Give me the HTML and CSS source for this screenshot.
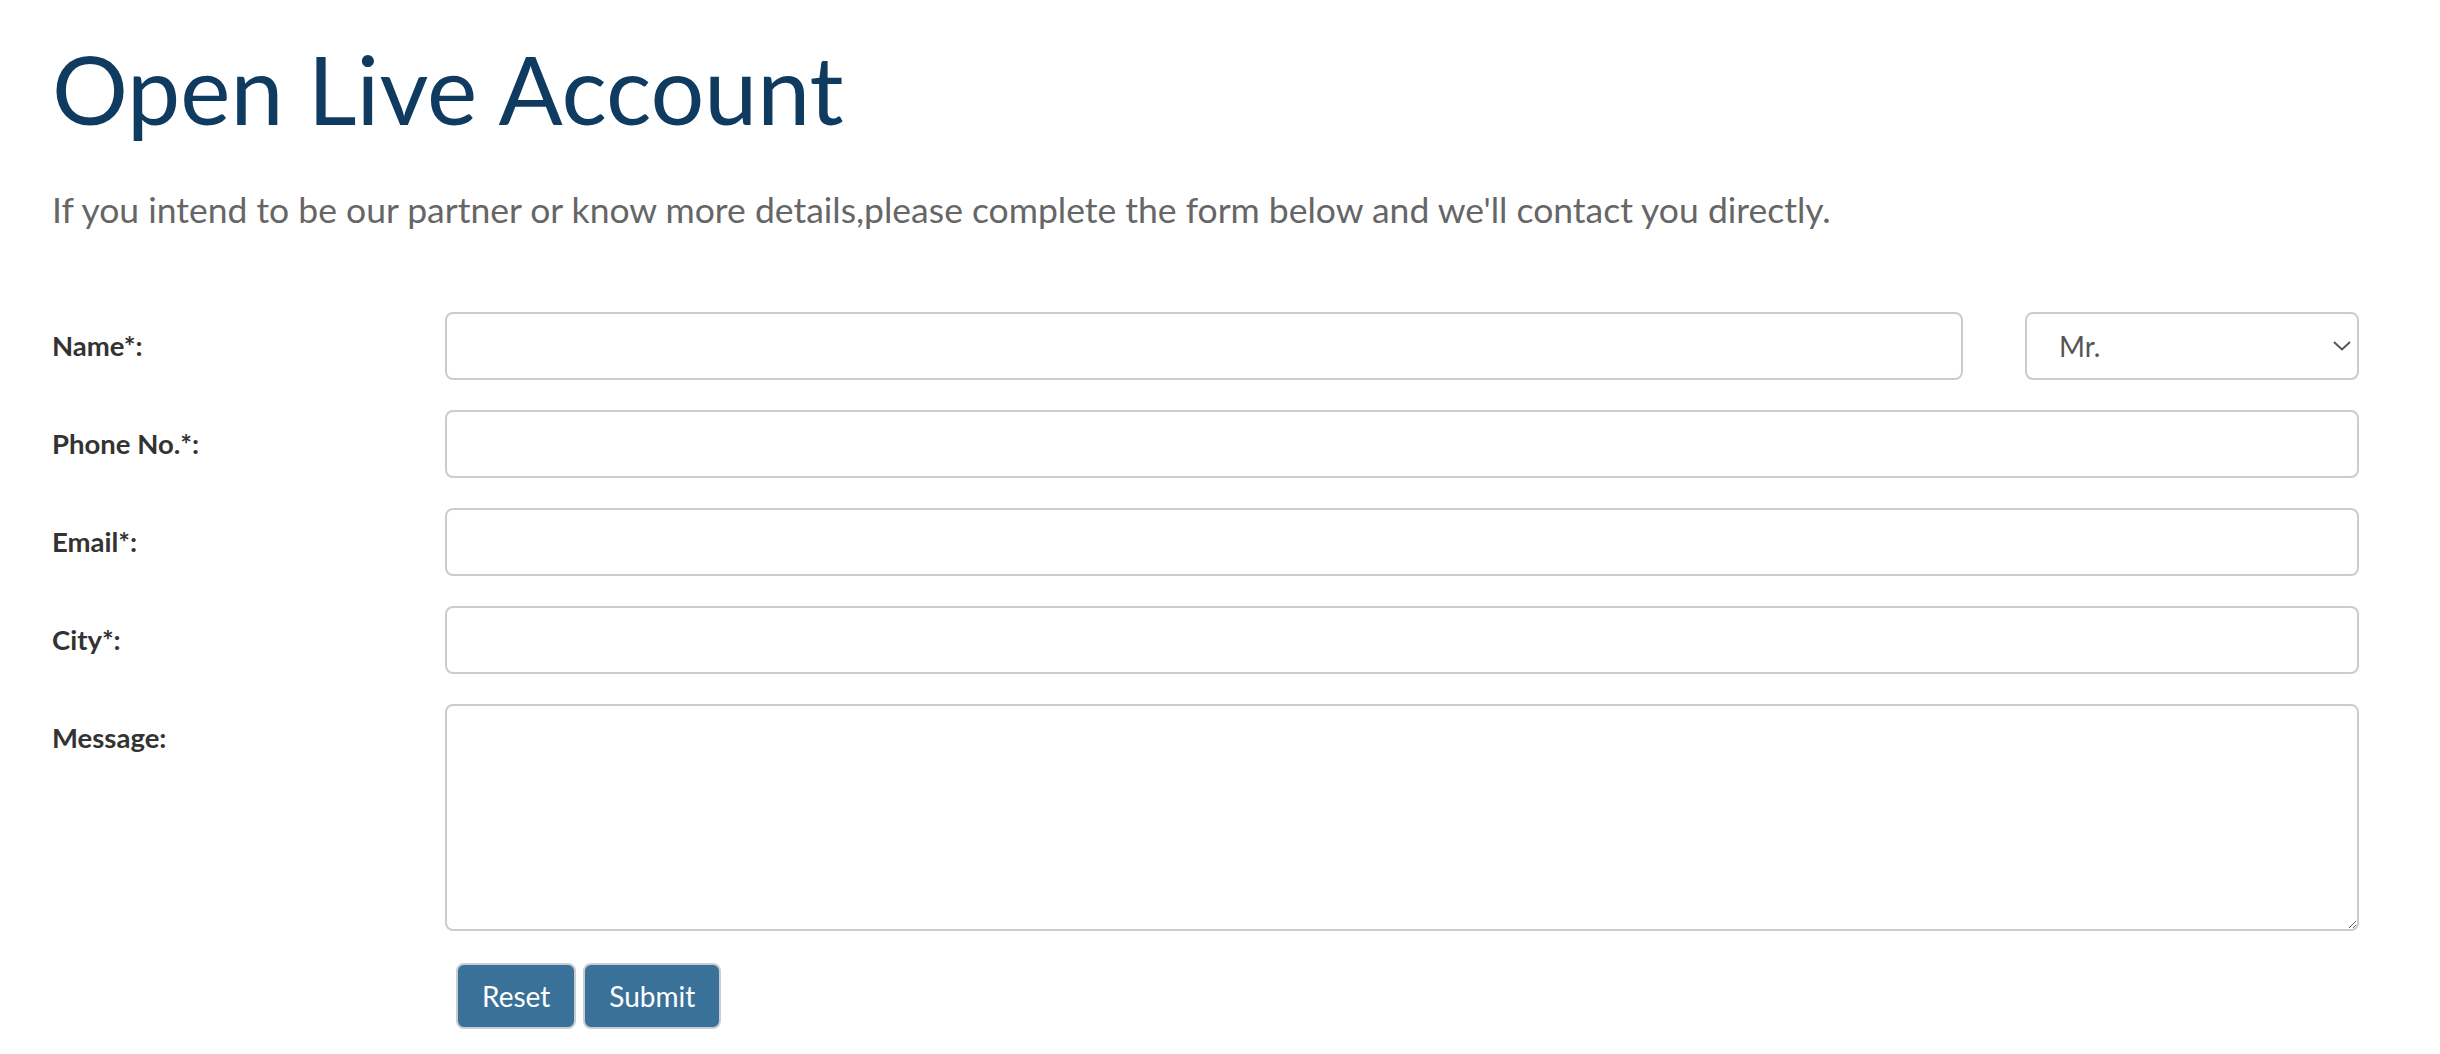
FILE: index.html
```html
<!DOCTYPE html>
<html lang="en">
<head>
<meta charset="utf-8">
<title>Open Live Account</title>
<link rel="stylesheet" href="styles.css">
</head>
<body>
<main class="page">
  <h1 class="title">Open Live Account</h1>
  <p class="intro">If you intend to be our partner or know more details,please complete the form below and we'll contact you directly.</p>
  <form class="form">
    <div class="row">
      <label class="label" for="name">Name*:</label>
      <div class="name-fields">
        <input class="control" id="name" type="text">
        <div class="select-wrap">
          <select class="control select">
            <option>Mr.</option>
            <option>Ms.</option>
          </select>
          <svg class="chevron" width="18" height="10" viewBox="0 0 18 10" aria-hidden="true"><path d="M1 1 L9 8.5 L17 1" fill="none" stroke="#555" stroke-width="2"/></svg>
        </div>
      </div>
    </div>
    <div class="row">
      <label class="label" for="phone">Phone No.*:</label>
      <input class="control" id="phone" type="text">
    </div>
    <div class="row">
      <label class="label" for="email">Email*:</label>
      <input class="control" id="email" type="text">
    </div>
    <div class="row">
      <label class="label" for="city">City*:</label>
      <input class="control" id="city" type="text">
    </div>
    <div class="row row-message">
      <label class="label" for="message">Message:</label>
      <textarea class="control textarea" id="message"></textarea>
    </div>
    <div class="row row-actions">
      <span></span>
      <div class="actions">
        <button class="btn" type="reset">Reset</button>
        <button class="btn" type="button">Submit</button>
      </div>
    </div>
  </form>
</main>
</body>
</html>
```

FILE: styles.css
```css
html, body {
  margin: 0;
  padding: 0;
  background: #ffffff;
}

body {
  font-family: Lato, "Open Sans", "Liberation Sans", sans-serif;
  color: #333333;
}

.page {
  padding: 35px 81px 0 52px;
}

.title {
  margin: 0;
  font-size: 95px;
  line-height: 106px;
  font-weight: 400;
  color: #0f3b60;
}

.intro {
  margin: 43px 0 0 0;
  font-size: 35.5px;
  line-height: 51px;
  color: #666666;
}

.form {
  margin-top: 77px;
}

.row {
  display: grid;
  grid-template-columns: 393px 1fr;
  margin-bottom: 30px;
}

.label {
  font-size: 27.5px;
  line-height: 40px;
  font-weight: 700;
  padding-top: 14px;
  color: #333333;
}

.control {
  box-sizing: border-box;
  height: 68px;
  width: 100%;
  margin: 0;
  border: 2px solid #cccccc;
  border-radius: 8px;
  background: #ffffff;
  font-family: Lato, "Open Sans", "Liberation Sans", sans-serif;
  font-size: 28px;
  color: #555555;
  padding: 0 24px;
  outline: none;
}

.name-fields {
  display: grid;
  grid-template-columns: 1fr 334px;
  column-gap: 62px;
}

.select-wrap {
  position: relative;
}

.select {
  appearance: none;
  -webkit-appearance: none;
  padding-left: 32px;
}

.chevron {
  position: absolute;
  right: 8px;
  top: 29px;
  pointer-events: none;
}

.row-message {
  margin-bottom: 32px;
}

.textarea {
  height: 227px;
  resize: both;
  padding: 12px 24px;
}

.actions {
  display: flex;
  gap: 7px;
  padding-left: 11px;
}

.btn {
  box-sizing: border-box;
  height: 66px;
  padding: 0 24px;
  border: 2px solid #c9ced3;
  border-radius: 8px;
  background: #3a7199;
  color: #ffffff;
  font-family: Lato, "Open Sans", "Liberation Sans", sans-serif;
  font-size: 28px;
  line-height: 1;
}
```
